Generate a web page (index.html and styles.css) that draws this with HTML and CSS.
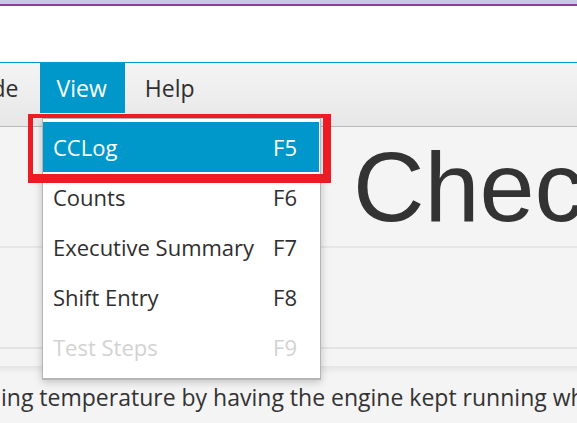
FILE: index.html
```html
<!DOCTYPE html>
<html>
<head>
<meta charset="utf-8">
<link rel="stylesheet" href="styles.css">
</head>
<body>
<div class="window">
  <div class="titlebar"></div>
  <div class="toolbar"></div>
  <div class="menubar">
    <div class="menu-item first">Mode</div>
    <div class="menu-item active">View</div>
    <div class="menu-item help">Help</div>
  </div>
  <div class="content">
    <div class="header"><span class="title">Chec</span></div>
    <div class="divider"></div>
    <div class="section"></div>
    <div class="divider thin"></div>
    <div class="band"></div>
    <div class="divider shadow"></div>
    <div class="textrow">ing temperature by having the engine kept running wh</div>
  </div>
  <div class="popup">
    <div class="popup-item selected"><span>CCLog</span><span class="key">F5</span></div>
    <div class="popup-item"><span>Counts</span><span class="key">F6</span></div>
    <div class="popup-item"><span>Executive Summary</span><span class="key">F7</span></div>
    <div class="popup-item"><span>Shift Entry</span><span class="key">F8</span></div>
    <div class="popup-item disabled"><span>Test Steps</span><span class="key">F9</span></div>
  </div>
  <div class="annotation"></div>
</div>
</body>
</html>
```

FILE: styles.css
```css
* { box-sizing: border-box; }
html, body { margin: 0; padding: 0; }
body {
  width: 577px;
  height: 423px;
  overflow: hidden;
  background: #f4f4f4;
  font-family: "Open Sans", "Noto Sans", sans-serif;
  color: #333;
}
.window {
  position: relative;
  width: 577px;
  height: 423px;
  overflow: hidden;
}
.titlebar {
  height: 6px;
  background: #c5cbe0;
  border-bottom: 2px solid #8e3a9e;
}
.toolbar {
  height: 57px;
  background: #fff;
  border-bottom: 1px solid #0099cc;
}
.menubar {
  display: flex;
  height: 64px;
  background: linear-gradient(#f4f4f4, #e7e7e7);
  border-bottom: 1px solid #b9b9b9;
  margin-left: -60px;
}
.menu-item {
  height: 50px;
  line-height: 50px;
  padding: 0 17px;
  font-size: 23px;
  color: #2f2f2f;
}
.menu-item.first { padding-right: 21px; }
.menu-item.active {
  background: #0098ca;
  color: #fff;
  padding: 0 18px 0 17px;
}
.menu-item.help { padding-left: 20px; }
.content {
  background: #f4f4f4;
}
.header {
  height: 119px;
  padding-left: 353px;
  white-space: nowrap;
  overflow: hidden;
}
.title {
  font-family: "Liberation Sans", Arial, sans-serif;
  font-size: 99px;
  line-height: 119px;
  color: #333;
}
.divider {
  height: 2px;
  background: #e6e6e6;
}
.section { height: 99px; }
.divider.thin { background: #e3e3e3; }
.band { height: 17px; }
.divider.shadow {
  height: 8px;
  background: linear-gradient(#e4e4e4, #f4f4f4);
}
.textrow {
  white-space: nowrap;
  overflow: hidden;
  font-size: 23px;
  line-height: 40px;
  padding-top: 3px;
  padding-left: 1px;
  color: #333;
}
.popup {
  position: absolute;
  left: 42px;
  top: 118px;
  width: 279px;
  height: 262px;
  background: #fff;
  border: 1px solid #b5b5b5;
  border-bottom-width: 2px;
  padding: 3px 1px 6px 0;
  box-shadow: 0 2px 8px rgba(0,0,0,0.22);
}
.popup-item {
  display: flex;
  justify-content: space-between;
  height: 50px;
  line-height: 50px;
  padding: 0 22px 0 10px;
  font-size: 22px;
  color: #2f2f2f;
}
.popup-item.selected {
  background: #0098ca;
  color: #fff;
}
.popup-item.disabled { color: #d2d2d2; }
.annotation {
  position: absolute;
  left: 28px;
  top: 114px;
  width: 303px;
  height: 69px;
  border-style: solid;
  border-color: #ed1c24;
  border-width: 4px 8px 9px 5px;
}
```
